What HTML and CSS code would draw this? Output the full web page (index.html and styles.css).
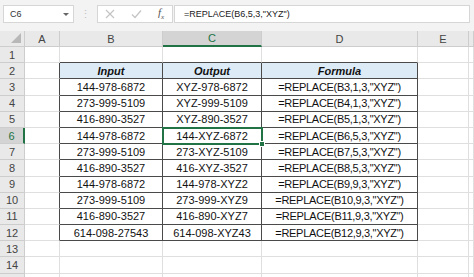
FILE: index.html
```html
<!DOCTYPE html>
<html lang="en">
<head>
  <meta charset="UTF-8">
  <title>REPLACE example</title>
  <link rel="stylesheet" href="styles.css">
</head>
<body>
  <!-- Formula bar -->
  <div class="toolbar">
    <div class="namebox"><span>C6</span><span class="caret"></span></div>
    <div class="grip">&#8942;</div>
    <div class="fx-buttons">
      <svg class="icon" width="10" height="10" viewBox="0 0 10 10"><path d="M1 1 L9 9 M9 1 L1 9" stroke="#c4c4c4" stroke-width="1.2" fill="none"/></svg>
      <svg class="icon" width="11" height="10" viewBox="0 0 11 10"><path d="M1 5.5 L4 8.5 L10 1.5" stroke="#c4c4c4" stroke-width="1.2" fill="none"/></svg>
      <span class="fx">f<sub>x</sub></span>
    </div>
    <div class="formula">=REPLACE(B6,5,3,"XYZ")</div>
  </div>

  <!-- Sheet grid -->
  <div class="sheet">
    <div class="corner"></div>
    <div class="hd">A</div>
    <div class="hd">B</div>
    <div class="hd sel">C</div>
    <div class="hd">D</div>
    <div class="hd">E</div>
    <div class="hd"></div>

    <div class="rh">1</div>
    <div class="c"></div><div class="c above"></div><div class="c above"></div><div class="c above"></div><div class="c"></div><div class="c"></div>

    <div class="rh">2</div>
    <div class="c left-of"></div>
    <div class="c t th">Input</div>
    <div class="c t th">Output</div>
    <div class="c t th">Formula</div>
    <div class="c"></div><div class="c"></div>

    <div class="rh">3</div>
    <div class="c left-of"></div>
    <div class="c t">144-978-6872</div>
    <div class="c t">XYZ-978-6872</div>
    <div class="c t f">=REPLACE(B3,1,3,"XYZ")</div>
    <div class="c"></div><div class="c"></div>

    <div class="rh">4</div>
    <div class="c left-of"></div>
    <div class="c t">273-999-5109</div>
    <div class="c t">XYZ-999-5109</div>
    <div class="c t f">=REPLACE(B4,1,3,"XYZ")</div>
    <div class="c"></div><div class="c"></div>

    <div class="rh">5</div>
    <div class="c left-of"></div>
    <div class="c t">416-890-3527</div>
    <div class="c t">XYZ-890-3527</div>
    <div class="c t f">=REPLACE(B5,1,3,"XYZ")</div>
    <div class="c"></div><div class="c"></div>

    <div class="rh sel">6</div>
    <div class="c left-of"></div>
    <div class="c t">144-978-6872</div>
    <div class="c t active">144-XYZ-6872</div>
    <div class="c t f">=REPLACE(B6,5,3,"XYZ")</div>
    <div class="c"></div><div class="c"></div>

    <div class="rh">7</div>
    <div class="c left-of"></div>
    <div class="c t">273-999-5109</div>
    <div class="c t">273-XYZ-5109</div>
    <div class="c t f">=REPLACE(B7,5,3,"XYZ")</div>
    <div class="c"></div><div class="c"></div>

    <div class="rh">8</div>
    <div class="c left-of"></div>
    <div class="c t">416-890-3527</div>
    <div class="c t">416-XYZ-3527</div>
    <div class="c t f">=REPLACE(B8,5,3,"XYZ")</div>
    <div class="c"></div><div class="c"></div>

    <div class="rh">9</div>
    <div class="c left-of"></div>
    <div class="c t">144-978-6872</div>
    <div class="c t">144-978-XYZ2</div>
    <div class="c t f">=REPLACE(B9,9,3,"XYZ")</div>
    <div class="c"></div><div class="c"></div>

    <div class="rh">10</div>
    <div class="c left-of"></div>
    <div class="c t">273-999-5109</div>
    <div class="c t">273-999-XYZ9</div>
    <div class="c t f">=REPLACE(B10,9,3,"XYZ")</div>
    <div class="c"></div><div class="c"></div>

    <div class="rh">11</div>
    <div class="c left-of"></div>
    <div class="c t">416-890-3527</div>
    <div class="c t">416-890-XYZ7</div>
    <div class="c t f">=REPLACE(B11,9,3,"XYZ")</div>
    <div class="c"></div><div class="c"></div>

    <div class="rh">12</div>
    <div class="c left-of"></div>
    <div class="c t">614-098-27543</div>
    <div class="c t">614-098-XYZ43</div>
    <div class="c t f">=REPLACE(B12,9,3,"XYZ")</div>
    <div class="c"></div><div class="c"></div>

    <div class="rh">13</div>
    <div class="c"></div><div class="c"></div><div class="c"></div><div class="c"></div><div class="c"></div><div class="c"></div>

    <div class="rh">14</div>
    <div class="c"></div><div class="c"></div><div class="c"></div><div class="c"></div><div class="c"></div><div class="c"></div>

    <div class="rh"></div>
    <div class="c"></div><div class="c"></div><div class="c"></div><div class="c"></div><div class="c"></div><div class="c"></div>
  </div>
</body>
</html>
```

FILE: styles.css
```css
/* Page */
body {
  margin: 0;
  width: 474px;
  height: 277px;
  overflow: hidden;
  background: #fff;
  font-family: "Liberation Sans", Arial, sans-serif;
}

/* Formula bar */
.toolbar {
  display: flex;
  align-items: flex-start;
  height: 31px;
  box-sizing: border-box;
  padding: 5px 4px 0 3px;
  background: #f3f3f3;
}
.namebox {
  width: 71px;
  height: 18px;
  box-sizing: border-box;
  display: flex;
  align-items: center;
  justify-content: space-between;
  padding: 0 4px 0 6px;
  background: #fff;
  border: 1px solid #d6d6d6;
  font-size: 9px;
  color: #333;
}
.caret {
  border-left: 3px solid transparent;
  border-right: 3px solid transparent;
  border-top: 3px solid #666;
}
.grip {
  width: 23px;
  text-align: center;
  font-size: 11px;
  line-height: 18px;
  color: #c2c2c2;
}
.fx-buttons {
  width: 76px;
  height: 18px;
  box-sizing: border-box;
  display: flex;
  align-items: center;
  gap: 16px;
  padding-left: 7px;
  background: #fff;
  border: 1px solid #d6d6d6;
}
.fx {
  font-family: "Liberation Serif", serif;
  font-style: italic;
  font-size: 11px;
  color: #555;
}
.fx sub {
  font-size: 7px;
}
.formula {
  flex: 1;
  height: 18px;
  box-sizing: border-box;
  margin-left: 1px;
  padding-left: 9px;
  background: #fff;
  border: 1px solid #d6d6d6;
  font-size: 9px;
  line-height: 16px;
  color: #222;
}

/* Grid */
.sheet {
  display: grid;
  grid-template-columns: 25px 35px 103px 99px 156px 51px 1fr;
  grid-template-rows: 16px;
  grid-auto-rows: 16.2px;
}
.corner,
.hd,
.rh {
  box-sizing: border-box;
  background: #e9e9e9;
  color: #444;
  font-size: 11px;
  border-right: 1px solid #cdcdcd;
  border-bottom: 1px solid #cdcdcd;
  display: flex;
  align-items: center;
  justify-content: center;
}
.corner {
  position: relative;
}
.corner::after {
  content: "";
  position: absolute;
  right: 3px;
  bottom: 3px;
  border-left: 10px solid transparent;
  border-bottom: 10px solid #b8b8b8;
}
.hd.sel {
  background: #d4d4d4;
  color: #217346;
  border-bottom: 2px solid #217346;
}
.rh.sel {
  background: #d4d4d4;
  color: #217346;
  border-right: 2px solid #217346;
}
.c {
  box-sizing: border-box;
  border-right: 1px solid #dfdfdf;
  border-bottom: 1px solid #dfdfdf;
  display: flex;
  align-items: center;
  justify-content: center;
  font-size: 11px;
  color: #111;
  white-space: nowrap;
}

/* Table B2:D12 */
.c.t {
  border-right-color: #4a4a4a;
  border-bottom-color: #4a4a4a;
}
.c.left-of {
  border-right-color: #4a4a4a;
}
.c.above {
  border-bottom-color: #4a4a4a;
}
.c.th {
  background: #ddebf7;
  font-weight: bold;
  font-style: italic;
}
.c.f {
  letter-spacing: -0.3px;
}

/* Active cell */
.c.active {
  position: relative;
  z-index: 1;
  outline: 2px solid #217346;
  outline-offset: -1px;
}
.c.active::after {
  content: "";
  position: absolute;
  right: -4px;
  bottom: -4px;
  width: 4px;
  height: 4px;
  background: #217346;
  border: 1px solid #fff;
}
```
